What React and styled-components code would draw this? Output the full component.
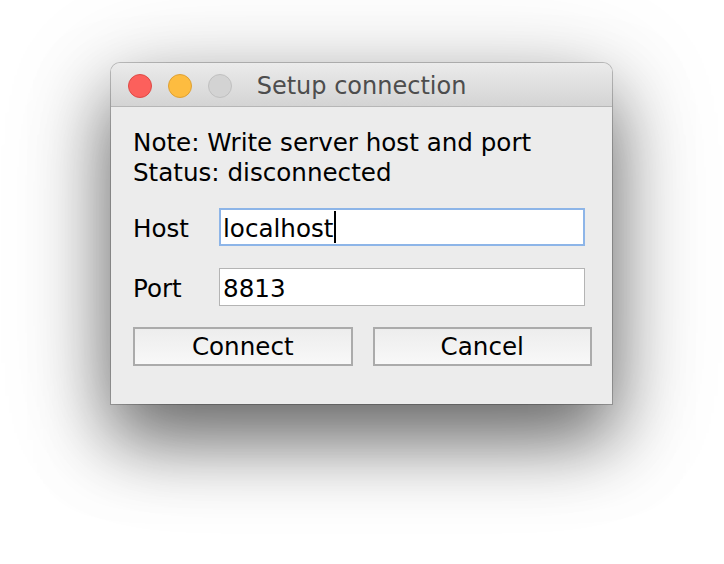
import React from "react";
import styled, { createGlobalStyle } from "styled-components";

const Global = createGlobalStyle`
  html, body { margin: 0; padding: 0; background: #ffffff; }
  body { font-family: "DejaVu Sans", "Noto Sans", sans-serif; }
  * { box-sizing: border-box; }
`;

const Page = styled.div`
  width: 724px;
  height: 564px;
  display: flex;
  align-items: flex-start;
  padding: 63px 0 0 111px;
  background: #ffffff;
`;

const Window = styled.div`
  width: 501px;
  height: 341px;
  background: #ececec;
  border-radius: 9px 9px 0 0;
  box-shadow: 0 0 0 1px rgba(0, 0, 0, 0.22), 0 36px 70px rgba(0, 0, 0, 0.5),
    0 20px 110px rgba(0, 0, 0, 0.22);
  display: flex;
  flex-direction: column;
  overflow: hidden;
`;

const TitleBar = styled.div`
  position: relative;
  height: 44px;
  flex: none;
  display: flex;
  align-items: center;
  padding: 2px 0 0 17px;
  background: linear-gradient(#ebebeb, #d4d4d4);
  border-bottom: 1px solid #b6b6b6;
`;

const Lights = styled.div`
  display: flex;
  gap: 16px;
`;

const Light = styled.span`
  width: 24px;
  height: 24px;
  border-radius: 50%;
  background: ${(p) => p.$fill};
  border: 1px solid ${(p) => p.$edge};
`;

const Title = styled.div`
  position: absolute;
  left: 0;
  right: 0;
  top: 8px;
  text-align: center;
  font-size: 24px;
  line-height: 30px;
  color: #4d4d4d;
`;

const Content = styled.div`
  padding: 21px 20px 0 22px;
  display: flex;
  flex-direction: column;
  color: #000;
  font-size: 24.6px;
`;

const Note = styled.div`
  line-height: 30px;
`;

const Row = styled.div`
  display: flex;
  align-items: center;
  margin-top: ${(p) => p.$top}px;
`;

const Label = styled.div`
  width: 86px;
  line-height: 30px;
  padding-top: 3px;
`;

const Field = styled.div`
  width: 366px;
  height: 38px;
  background: #fff;
  border: ${(p) => (p.$focused ? "2px solid #8db5e8" : "1px solid #b4b4b4")};
  padding: 3px 0 0 ${(p) => (p.$focused ? 2 : 3)}px;
  display: flex;
  align-items: center;
  font-size: 24.6px;
  line-height: 30px;
`;

const Caret = styled.span`
  display: inline-block;
  width: 2px;
  height: 32px;
  background: #000;
  margin: -3px 0 0 1px;
`;

const Buttons = styled.div`
  display: grid;
  grid-template-columns: 1fr 1fr;
  gap: 20px;
  margin-top: 21px;
`;

const Button = styled.button`
  height: 39px;
  border: 2px solid #ababab;
  background: linear-gradient(#ededed, #f8f8f8);
  font-family: "DejaVu Sans", "Noto Sans", sans-serif;
  font-size: 24.6px;
  color: #000;
  padding: 0;
  line-height: 30px;
`;

export default function App() {
  return (
    <>
      <Global />
      <Page>
        <Window>
          <TitleBar>
            <Lights>
              <Light $fill="#fc605c" $edge="#de4a46" />
              <Light $fill="#fdbc40" $edge="#dea134" />
              <Light $fill="#d3d3d3" $edge="#c0c0c0" />
            </Lights>
            <Title>Setup connection</Title>
          </TitleBar>
          <Content>
            <Note>Note: Write server host and port</Note>
            <Note>Status: disconnected</Note>
            <Row $top={20}>
              <Label>Host</Label>
              <Field $focused>
                localhost
                <Caret />
              </Field>
            </Row>
            <Row $top={22}>
              <Label>Port</Label>
              <Field>8813</Field>
            </Row>
            <Buttons>
              <Button>Connect</Button>
              <Button>Cancel</Button>
            </Buttons>
          </Content>
        </Window>
      </Page>
    </>
  );
}
